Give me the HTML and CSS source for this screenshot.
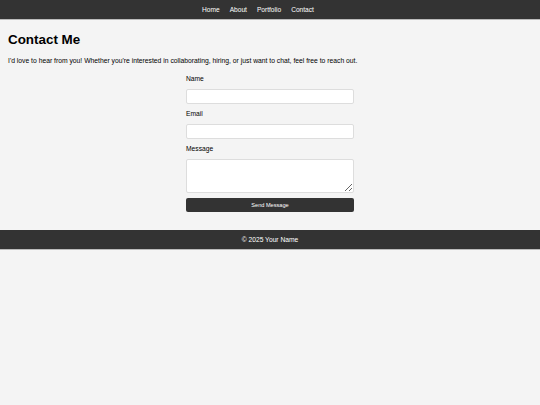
FILE: index.html
```html
<!DOCTYPE html>
<html lang="en">
<head>
<meta charset="utf-8">
<title>Contact Me</title>
<link rel="stylesheet" href="styles.css">
</head>
<body>
<header class="site-header">
  <nav class="nav">
    <a href="#" class="nav-link">Home</a>
    <a href="#" class="nav-link">About</a>
    <a href="#" class="nav-link">Portfolio</a>
    <a href="#" class="nav-link">Contact</a>
  </nav>
</header>
<main class="content">
  <h1 class="title">Contact Me</h1>
  <p class="intro">I'd love to hear from you! Whether you're interested in collaborating, hiring, or just want to chat, feel free to reach out.</p>
  <form class="contact-form">
    <label class="field-label" for="name">Name</label>
    <input class="field-input" type="text" id="name">
    <label class="field-label" for="email">Email</label>
    <input class="field-input" type="email" id="email">
    <label class="field-label" for="message">Message</label>
    <textarea class="field-input field-area" id="message"></textarea>
    <button class="send-btn" type="button">Send Message</button>
  </form>
</main>
<footer class="site-footer">© 2025 Your Name</footer>
</body>
</html>
```
FILE: styles.css
```css
html, body {
  margin: 0;
  padding: 0;
  background: #f4f4f4;
  font-family: "Liberation Sans", Arial, sans-serif;
  color: #000;
}
.site-header {
  background: #333;
  height: 19px;
  border-bottom: 1px solid #bbb;
  display: flex;
  align-items: center;
  justify-content: center;
}
.nav {
  display: flex;
  gap: 10px;
  padding-right: 24px;
}
.nav-link {
  color: #fff;
  text-decoration: none;
  font-size: 6.6px;
}
.content {
  padding: 0 8px 18px;
}
.title {
  margin: 12px 0 0;
  font-size: 13.4px;
  line-height: 15.4px;
}
.intro {
  margin: 10px 0 9.5px;
  font-size: 6.78px;
  line-height: 8px;
}
.contact-form {
  width: 168px;
  margin: 0 auto;
  display: flex;
  flex-direction: column;
}
.field-label {
  font-size: 6.7px;
  line-height: 8px;
  margin-bottom: 6px;
}
.field-input {
  box-sizing: border-box;
  height: 15.5px;
  margin: 0 0 5.5px;
  border: 1px solid #ddd;
  border-radius: 2px;
  background: #fff;
  font-size: 5.6px;
  padding: 2px;
}
.field-area {
  height: 34px;
  margin-bottom: 5px;
}
.send-btn {
  height: 14px;
  border: none;
  border-radius: 2px;
  background: #333;
  color: #fff;
  font-family: "Liberation Sans", Arial, sans-serif;
  font-size: 5.6px;
  padding: 0;
}
.site-footer {
  background: #333;
  color: #fff;
  height: 19px;
  border-bottom: 1px solid #bbb;
  display: flex;
  align-items: center;
  justify-content: center;
  font-size: 6.7px;
}
```
